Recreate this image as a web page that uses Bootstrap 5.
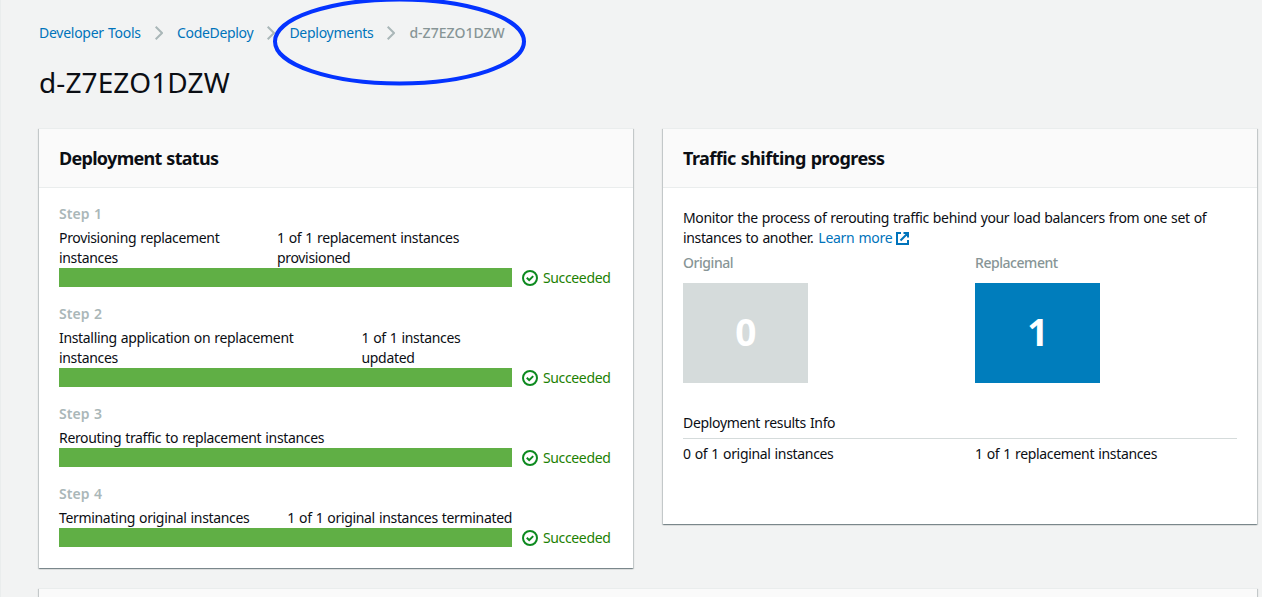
<!DOCTYPE html>
<html lang="en">
<head>
<meta charset="utf-8">
<meta name="viewport" content="width=device-width, initial-scale=1">
<title>d-Z7EZO1DZW</title>
<link href="https://cdn.jsdelivr.net/npm/bootstrap@5.3.0/dist/css/bootstrap.min.css" rel="stylesheet">
<style>
body{background:#f2f3f3;color:#0b0e14;font:14px/20px "Noto Sans",sans-serif;letter-spacing:-.33px;word-spacing:.7px;box-shadow:inset 1px 0 #eaeded}
a{color:#0073bb;text-decoration:none}
main{padding:23px 5px 0 39px;height:597px;overflow:hidden}
.crumbs{height:20px}
.crumbs svg{margin:0 14px;width:8px;height:14px;flex:none}
.crumb-1{width:102px;letter-spacing:-.26px}.crumb-2{width:76.4px}.crumb-3{width:84px;letter-spacing:-.27px}
.crumb-4{letter-spacing:.02px;font-weight:500}
.muted-text{color:#879596}
.page-title{font-size:28px;line-height:36px;margin:21px 0 28px;letter-spacing:.1px;font-weight:400}
.panels{gap:30px}
.panel{border:0;border-radius:0;flex:1 1 0;min-width:0;color:inherit;box-shadow:0 1px 1px 0 rgba(0,28,36,.3),1px 1px 1px 0 rgba(0,28,36,.15),-1px 1px 1px 0 rgba(0,28,36,.15)}
.panel .card-header{background:#fafafa;border-top:1px solid #eaeded;border-bottom:1px solid #eaeded;border-radius:0;height:60px;padding:18px 20px}
.panel h2{font-size:18px;line-height:22px;font-weight:700;margin:0;letter-spacing:-.53px}
.panel h2.t-left{letter-spacing:-.7px}
.steps{padding:16px 20px 20px;gap:16px}
.traffic{padding:20px 20px 60px}
.intro{letter-spacing:-.36px}
.intro a{letter-spacing:-.28px;margin-left:1px}
.intro svg{position:relative;top:-1px}
.step-label{color:#aab7b8;font-weight:600;margin-bottom:4px;letter-spacing:.05px}
.track{width:453px}
.bar{height:19px;background:#60af45;border-radius:0}
.status{color:#1d8102;gap:5px;margin-left:10px;white-space:nowrap;letter-spacing:-.36px}
.status svg{stroke:#0d8a1f}
.left-1{width:170px}.right-1{width:235px}.right-2{width:150.5px}
.duo{display:grid;grid-template-columns:1fr 1fr;column-gap:30px}
.caps{margin-top:5px;font-weight:500;letter-spacing:-.45px}
.tile{width:125px;height:100px;margin-top:10px;padding-bottom:2px;color:#fff;font-size:37px;font-weight:700;background:#d5dbdb}
.tile-on{background:#007dbc}
.results{margin-top:30px;padding-bottom:5px;border-bottom:1px solid #d5dbdb;margin-bottom:5px}
.next-panel{margin-top:20px;height:60px;background:#fafafa;border-top:1px solid #eaeded}
.ring{left:270px;top:-4px}
</style>
</head>
<body class="position-relative">
<main>
  <nav class="crumbs d-flex align-items-center text-nowrap" aria-label="breadcrumb">
    <a class="crumb-1" href="#">Developer Tools</a>
    <svg viewBox="0 0 8 14" fill="none" stroke="#aab7b8" stroke-width="2"><path d="M.7.7 7 7 .7 13.3"/></svg>
    <a class="crumb-2" href="#">CodeDeploy</a>
    <svg viewBox="0 0 8 14" fill="none" stroke="#aab7b8" stroke-width="2"><path d="M.7.7 7 7 .7 13.3"/></svg>
    <a class="crumb-3" href="#">Deployments</a>
    <svg viewBox="0 0 8 14" fill="none" stroke="#aab7b8" stroke-width="2"><path d="M.7.7 7 7 .7 13.3"/></svg>
    <span class="muted-text crumb-4">d-Z7EZO1DZW</span>
  </nav>
  <h1 class="page-title">d-Z7EZO1DZW</h1>
  <div class="panels d-flex align-items-start">
    <section class="panel card">
      <div class="card-header"><h2 class="t-left">Deployment status</h2></div>
      <div class="steps card-body d-flex flex-column">
        <div>
          <div class="step-label">Step 1</div>
          <div class="track d-flex justify-content-between"><span class="left-1">Provisioning replacement instances</span><span class="right-1">1 of 1 replacement instances<br>provisioned</span></div>
          <div class="d-flex"><div class="progress-bar bar track"></div><div class="status d-flex align-items-center"><svg width="16" height="16" viewBox="0 0 16 16" fill="none" stroke-width="2"><circle cx="8" cy="8" r="7"/><path d="m4.8 7.8 2.4 2.4 4-4.1"/></svg>Succeeded</div></div>
        </div>
        <div>
          <div class="step-label">Step 2</div>
          <div class="track d-flex justify-content-between"><span>Installing application on replacement<br>instances</span><span class="right-2">1 of 1 instances<br>updated</span></div>
          <div class="d-flex"><div class="progress-bar bar track"></div><div class="status d-flex align-items-center"><svg width="16" height="16" viewBox="0 0 16 16" fill="none" stroke-width="2"><circle cx="8" cy="8" r="7"/><path d="m4.8 7.8 2.4 2.4 4-4.1"/></svg>Succeeded</div></div>
        </div>
        <div>
          <div class="step-label">Step 3</div>
          <div class="track">Rerouting traffic to replacement instances</div>
          <div class="d-flex"><div class="progress-bar bar track"></div><div class="status d-flex align-items-center"><svg width="16" height="16" viewBox="0 0 16 16" fill="none" stroke-width="2"><circle cx="8" cy="8" r="7"/><path d="m4.8 7.8 2.4 2.4 4-4.1"/></svg>Succeeded</div></div>
        </div>
        <div>
          <div class="step-label">Step 4</div>
          <div class="track d-flex justify-content-between text-nowrap"><span>Terminating original instances</span><span>1 of 1 original instances terminated</span></div>
          <div class="d-flex"><div class="progress-bar bar track"></div><div class="status d-flex align-items-center"><svg width="16" height="16" viewBox="0 0 16 16" fill="none" stroke-width="2"><circle cx="8" cy="8" r="7"/><path d="m4.8 7.8 2.4 2.4 4-4.1"/></svg>Succeeded</div></div>
        </div>
      </div>
    </section>
    <section class="panel card">
      <div class="card-header"><h2>Traffic shifting progress</h2></div>
      <div class="traffic card-body">
        <div class="intro text-nowrap">Monitor the process of rerouting traffic behind your load balancers from one set of<br>instances to another. <a href="#">Learn more <svg width="13" height="13" viewBox="0 0 13 13" fill="none" stroke="currentColor" stroke-width="2"><path d="M5 1H1v11h11V8M7.5 1H12v4.5M12 1 4.5 8.5"/></svg></a></div>
        <div class="duo caps muted-text">
          <div>Original<div class="tile d-flex align-items-center justify-content-center">0</div></div>
          <div>Replacement<div class="tile tile-on d-flex align-items-center justify-content-center">1</div></div>
        </div>
        <div class="results">Deployment results Info</div>
        <div class="duo"><span>0 of 1 original instances</span><span>1 of 1 replacement instances</span></div>
      </div>
    </section>
  </div>
  <section class="panel card next-panel"></section>
</main>
<svg class="ring position-absolute" width="260" height="92" viewBox="0 0 260 92" fill="none" stroke="#0433ff" stroke-width="4"><ellipse cx="129.5" cy="45.4" rx="124.5" ry="42"/></svg>
<script src="https://cdn.jsdelivr.net/npm/bootstrap@5.3.0/dist/js/bootstrap.bundle.min.js"></script>
</body>
</html>
